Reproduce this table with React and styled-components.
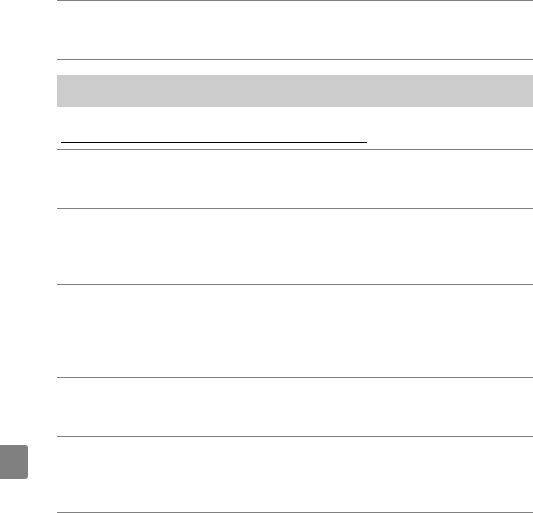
import React from "react";
import styled, { createGlobalStyle } from "styled-components";

const GlobalStyle = createGlobalStyle`
  * { box-sizing: border-box; }
  body {
    margin: 0;
    background: #ffffff;
    font-family: "Liberation Sans", Arial, sans-serif;
  }
`;

const Page = styled.div`
  display: flex;
  width: 533px;
  height: 513px;
  overflow: hidden;
`;

// left margin that carries the chapter thumb tab
const Gutter = styled.div`
  width: 57px;
  flex-shrink: 0;
  padding-top: 445px;
`;

const ThumbTab = styled.div`
  width: 28px;
  height: 34px;
  background: #808080;
  border-radius: 0 3px 3px 0;
`;

const Main = styled.div`
  flex: 1;
  display: flex;
  flex-direction: column;
  border-top: 1px solid #808080;
`;

const Row = styled.div`
  height: ${(p) => p.$h}px;
  flex-shrink: 0;
  border-bottom: 1px solid #808080;
`;

const Band = styled.div`
  height: 32px;
  margin-top: 15px;
  flex-shrink: 0;
  background: #cccccc;
`;

const HeadingRow = styled.div`
  height: 43px;
  flex-shrink: 0;
  border-bottom: 1px solid #808080;
`;

const Underline = styled.div`
  width: 306px;
  height: 36px;
  margin-left: 4px;
  border-bottom: 1px solid #000000;
`;

const rows = [59, 76, 93, 59, 76];

export default function App() {
  return (
    <React.Fragment>
      <GlobalStyle />
      <Page>
        <Gutter>
          <ThumbTab />
        </Gutter>
        <Main>
          <Row $h={59} />
          <Band />
          <HeadingRow>
            <Underline />
          </HeadingRow>
          {rows.map((h, i) => (
            <Row key={i} $h={h} />
          ))}
        </Main>
      </Page>
    </React.Fragment>
  );
}
